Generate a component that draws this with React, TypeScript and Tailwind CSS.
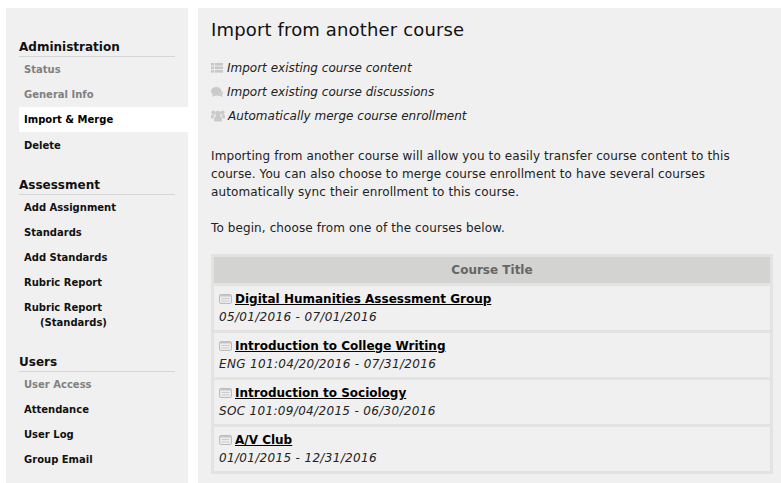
import React from 'react';

const font = { fontFamily: '"DejaVu Sans", Verdana, sans-serif' };

type NavItem = { label: string; muted?: boolean; active?: boolean; second?: string };

const NavGroup = ({ title, items, className }: { title: string; items: NavItem[]; className: string }) => (
  <div className={className}>
    <h3 className="mr-[13px] h-[18px] border-b border-[#d6d6d6] pt-[1px] text-[12px] leading-[15px] font-bold text-[#111]">{title}</h3>
    <ul>
      {items.map((item) => (
        <li
          key={item.label + (item.second || '')}
          className={`px-[5px] py-[5px] text-[10px] leading-[15px] font-bold ${item.active ? 'mb-[1px] bg-white text-black' : item.muted ? 'text-[#808080]' : 'text-[#111]'}`}
        >
          {item.label}
          {item.second && <div className="pl-[16px]">{item.second}</div>}
        </li>
      ))}
    </ul>
  </div>
);

const ListIcon = () => (
  <svg width="12" height="10" viewBox="0 0 12 10" fill="#c8c8c8" className="shrink-0">
    <rect x="0" y="0" width="3" height="2.6" />
    <rect x="0" y="3.5" width="3" height="2.6" />
    <rect x="0" y="7" width="3" height="2.6" />
    <rect x="3.8" y="0" width="8.2" height="2.6" />
    <rect x="3.8" y="3.5" width="8.2" height="2.6" />
    <rect x="3.8" y="7" width="8.2" height="2.6" />
  </svg>
);

const ChatIcon = () => (
  <svg width="12" height="11" viewBox="0 0 12 11" fill="#cacaca" className="shrink-0">
    <ellipse cx="5.2" cy="4.2" rx="5.2" ry="4.2" />
    <path d="M2 7 L1.2 10 L5.4 8 Z" />
    <path d="M10.8 3.6 C12.5 5 12.3 7 11 7.9 L11.6 10.2 L8.6 8.8 C7.6 8.8 6.8 8.6 6.2 8.2 C8.8 8.1 11 6.2 10.8 3.6 Z" />
  </svg>
);

const UsersIcon = () => (
  <svg width="14" height="12" viewBox="0 0 14 12" fill="#cacaca" className="shrink-0">
    <circle cx="7" cy="3.6" r="2.8" />
    <path d="M3.2 11.6 V8.2 C3.2 6.6 4.8 6 7 6 C9.2 6 10.8 6.6 10.8 8.2 V11.6 Z" />
    <circle cx="2.4" cy="2.4" r="2" />
    <circle cx="11.6" cy="2.4" r="2" />
    <path d="M0 8.4 V6 C0 5 1 4.6 2.6 4.6 L3.8 5.6 C2.8 6.2 2.4 7 2.4 8.4 Z" />
    <path d="M14 8.4 V6 C14 5 13 4.6 11.4 4.6 L10.2 5.6 C11.2 6.2 11.6 7 11.6 8.4 Z" />
  </svg>
);

const CourseIcon = () => (
  <svg width="13" height="10" viewBox="0 0 13 10" className="shrink-0">
    <rect x="0.5" y="0.5" width="12" height="9" rx="1.5" fill="#ececec" stroke="#bcbcbc" />
    <rect x="1" y="1" width="11" height="1.5" fill="#c6c6c6" />
    <rect x="2.5" y="4" width="8" height="1" fill="#cccccc" />
    <rect x="2.5" y="6.5" width="8" height="1" fill="#cccccc" />
  </svg>
);

const courses = [
  { name: 'Digital Humanities Assessment Group', dates: '05/01/2016 - 07/01/2016' },
  { name: 'Introduction to College Writing', dates: 'ENG 101:04/20/2016 - 07/31/2016' },
  { name: 'Introduction to Sociology', dates: 'SOC 101:09/04/2015 - 06/30/2016' },
  { name: 'A/V Club', dates: '01/01/2015 - 12/31/2016' },
];

export default function App() {
  return (
    <div style={font} className="flex h-[483px] w-[781px] items-stretch overflow-hidden bg-white pt-2 pl-[6px]">
      <aside className="w-[182px] shrink-0 bg-[#f0f0f0] pt-[31px] pl-[13px]">
        <NavGroup
          title="Administration"
          className=""
          items={[
            { label: 'Status', muted: true },
            { label: 'General Info', muted: true },
            { label: 'Import & Merge', active: true },
            { label: 'Delete' },
          ]}
        />
        <NavGroup
          title="Assessment"
          className="mt-[19px]"
          items={[
            { label: 'Add Assignment' },
            { label: 'Standards' },
            { label: 'Add Standards' },
            { label: 'Rubric Report' },
            { label: 'Rubric Report', second: '(Standards)' },
          ]}
        />
        <NavGroup
          title="Users"
          className="mt-[19px]"
          items={[
            { label: 'User Access', muted: true },
            { label: 'Attendance' },
            { label: 'User Log' },
            { label: 'Group Email' },
          ]}
        />
      </aside>

      <main className="ml-[10px] flex-1 bg-[#f0f0f0] pt-[11px] pr-2 pl-[13px] text-[12px] text-[#222]">
        <h1 className="text-[18px] leading-[22px] font-normal tracking-[0.15px] text-[#111]">Import from another course</h1>
        <div className="mt-[18px] space-y-[6px] text-[12px] leading-[18px] italic">
          <div className="flex items-center gap-[4px]"><ListIcon /> Import existing course content</div>
          <div className="flex items-center gap-[4px]"><ChatIcon /> Import existing course discussions</div>
          <div className="flex items-center gap-[3px]"><UsersIcon /> Automatically merge course enrollment</div>
        </div>
        <p className="mt-[22px] leading-[18px] tracking-[0.1px]">
          Importing from another course will allow you to easily transfer course content to this course. You can also choose to merge course enrollment to have several courses automatically sync their enrollment to this course.
        </p>
        <p className="mt-[18px] leading-[18px] tracking-[0.1px]">To begin, choose from one of the courses below.</p>

        <div className="mt-[17px] flex flex-col gap-[3px] bg-[#e3e3e3] p-[3px]">
          <div className="flex h-[26px] items-center justify-center bg-[#d3d3d1] text-[12px] font-bold text-[#666]">Course Title</div>
          {courses.map((course) => (
            <div key={course.name} className="h-[44px] bg-[#f0f0f0] px-[5px] pt-[4px] leading-[18px]">
              <div className="flex items-center gap-[3px]">
                <CourseIcon />
                <a className="font-bold text-black underline">{course.name}</a>
              </div>
              <div className="tracking-[0.33px] italic">{course.dates}</div>
            </div>
          ))}
        </div>
      </main>
    </div>
  );
}
